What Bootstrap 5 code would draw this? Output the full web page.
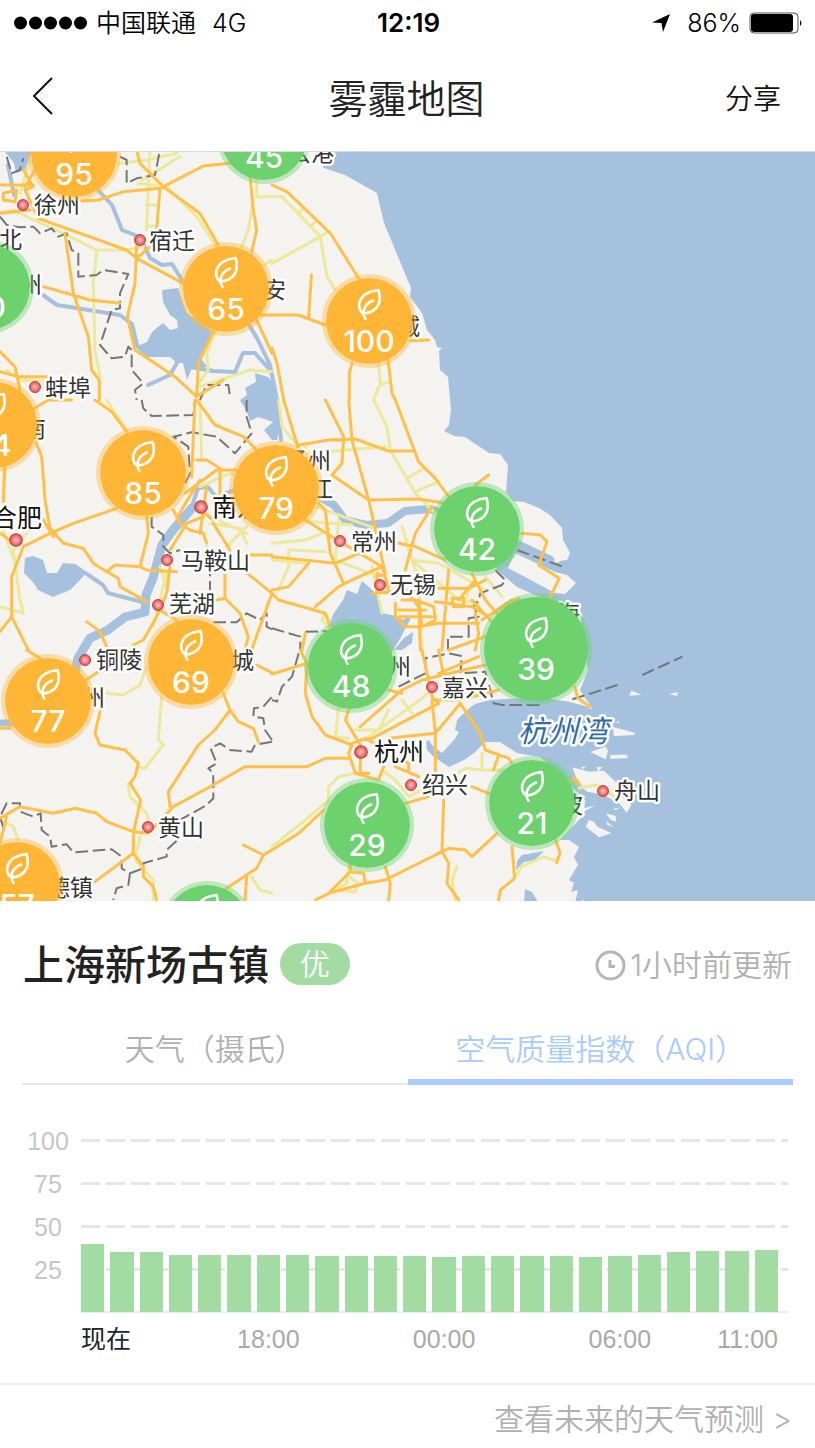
<!DOCTYPE html>
<html lang="zh-CN">
<head>
<meta charset="utf-8">
<meta name="viewport" content="width=device-width, initial-scale=1">
<title>雾霾地图</title>
<link rel="stylesheet" href="https://cdn.jsdelivr.net/npm/bootstrap@5.3.0/dist/css/bootstrap.min.css">
<style>
  body { font-family: "Inter", "Noto Sans CJK SC", sans-serif; color: #222; background: #fff; }
  svg { display: block; }

  .status-row { height: 46px; padding: 0 12px 0 14px; font-size: 25px; line-height: 46px; color: #000; }
  .status-row .side { flex: 1 1 0; }
  .carrier { font-weight: 350; }
  .clock { font-size: 26px; font-weight: 600; }

  .title-bar { height: 105px; padding: 0 34px 0 32px; }
  .title-bar .side { flex: 1 1 0; }
  .title-bar h1 { font-size: 39px; line-height: 56px; font-weight: 350; }
  .plain-btn { border: 0; background: none; padding: 0; color: #111; }
  .share-btn { font-size: 28px; line-height: 40px; font-weight: 350; }

  .map-area { height: 750px; border-top: 1px solid #d5dbe2; background: #a5c1de; }
  .map-area > svg { height: 749px; width: 100%; }
  .land { fill: #f4f3f0; }
  .sea { fill: #a5c1de; }
  .river, .road, .lane, .edge { fill: none; stroke-linejoin: round; stroke-linecap: round; }
  .river { stroke: #a5c1de; }
  .lane { stroke: #ece99a; stroke-width: 9; }
  .road { stroke: #ffc04a; stroke-width: 9; }
  .edge { stroke: #74767a; stroke-width: 6; stroke-dasharray: 38 14; stroke-linecap: butt; }
  .city text { font: 23px "Noto Sans CJK SC", sans-serif; fill: #333; stroke: #fff; stroke-width: 5px; paint-order: stroke; stroke-linejoin: round; }
  .city .r { text-anchor: end; }
  .city .big { font-size: 25px; fill: #111; }
  .city .bay { font-size: 30px; font-style: italic; fill: #2f6ba8; }

  .pin { position: absolute; width: 94px; height: 94px; margin: -47px 0 0 -47px; padding: 4px 0 0; border: 0; border-radius: 50%;
         color: #fff; font-size: 30px; line-height: 36px; font-weight: 500; }
  .pin svg { width: 24px; height: 32px; margin-bottom: 3px; }
  .pin.good { background: #6dd26e; border: 4px solid rgba(109,210,110,.4); }
  .pin.fair { background: #ffb636; border: 4px solid rgba(255,182,54,.4); }
  .pin.good, .pin.fair { background-clip: padding-box; }
  .pin.current { width: 112px; height: 112px; margin: -56px 0 0 -56px; }

  .place { padding: 34px 23px 0; }
  .place h2 { font-size: 41px; line-height: 60px; font-weight: 500; }
  .grade { font-size: 30px; line-height: 42px; font-weight: 350; background: #a2dca2; padding: 0 20px; margin: 0 0 2px 11px; }
  .updated { font-size: 30px; line-height: 44px; font-weight: 350; color: #b0b0b0; }

  .tab-row { margin: 24px 22px 0; border-bottom: 2px solid #e9e9e9; }
  .tab-row .nav-link { width: 100%; height: 66px; padding: 8px 0 16px; font-size: 30px; line-height: 44px; font-weight: 350; color: #b0b0b0; border: 0; border-bottom: 6px solid transparent; margin-bottom: -2px; background: none; border-radius: 0; }
  .tab-row .nav-link.active { color: #a9cbff; border-bottom-color: #a9cbff; }

  .chart { margin: 35px 27px 0 15px; font-family: "Liberation Sans", "Noto Sans CJK SC", sans-serif; font-size: 25px; }
  .scale-col { width: 66px; flex: none; color: #c6c6c6; text-align: center; }
  .scale-col div { height: 43px; line-height: 43px; }
  .plot { display: grid; margin-top: 19px; height: 175px; }
  .plot > * { grid-area: 1 / 1; }
  .rules div { height: 43px; background: repeating-linear-gradient(90deg, #e6e6e6 0 19px, transparent 19px 25px) 0 0 / 100% 3px no-repeat; }
  .rules .base { height: 2px; background: #ececec; }
  .bars { display: grid; grid-template-columns: repeat(24, 1fr); column-gap: 6px; align-items: end; margin-right: 10px; padding-bottom: 2px; }
  .bars i { background: #a2dca2; }
  .hours { display: grid; grid-template-columns: repeat(24, 1fr); column-gap: 6px; margin-right: 10px; padding-top: 7px; line-height: 36px; color: #a9a9a9; text-align: center; white-space: nowrap; }

  .more { margin-top: 26px; padding: 10px 23px 0; border-top: 2px solid #f1f1f1; height: 64px; }
  .more a { font-size: 30px; line-height: 48px; font-weight: 350; color: #b0b0b0; text-decoration: none; }
</style>
</head>
<body>

<svg width="0" height="0" class="position-absolute" aria-hidden="true">
  <symbol id="leaf" viewBox="0 0 24 32">
    <path d="M21.500 2C14 3 6 5 3 13C1 18 2.500 23 5.500 25M12 24.500C18 22.500 21.500 19 22.500 13C23 9 22.500 5 21.500 2M16 12.500C10.500 14.500 7 19 6.500 24C6.500 27 7 29 8.500 31M7 24.800Q10 25.500 12 24.500" fill="none" stroke="#fff" stroke-width="2.600" stroke-linecap="round" stroke-linejoin="round"/>
  </symbol>
  <radialGradient id="red"><stop offset="0" stop-color="#ffc9c4"/><stop offset="1" stop-color="#e8484f"/></radialGradient>
  <symbol id="dot" viewBox="-7 -7 14 14"><circle r="5.500" fill="url(#red)" stroke="#b54950"/></symbol>
</svg>

<header>
  <div class="status-row d-flex align-items-center">
    <div class="side d-flex align-items-center">
      <svg width="74" height="16" viewBox="0 0 74 16" aria-hidden="true"><circle cx="6.500" cy="8" r="6.500"/><circle cx="21.500" cy="8" r="6.500"/><circle cx="36.500" cy="8" r="6.500"/><circle cx="51.500" cy="8" r="6.500"/><circle cx="66.500" cy="8" r="6.500"/></svg>
      <span class="carrier ms-2">中国联通</span><span class="carrier ms-3">4G</span>
    </div>
    <span class="clock">12:19</span>
    <div class="side d-flex align-items-center justify-content-end">
      <svg class="me-3" width="20" height="20" viewBox="0 0 20 20" aria-hidden="true"><path d="M19 1L12 19L10.500 10L1 9.500Z"/></svg>
      <span class="carrier me-2">86%</span>
      <svg width="54" height="24" viewBox="0 0 54 24" aria-hidden="true"><rect x="1" y="2" width="48" height="20" rx="4" fill="none" stroke="#555"/><rect x="2" y="3" width="42" height="18" rx="3"/><path d="M51 9q3 3 0 6z"/></svg>
    </div>
  </div>
  <div class="title-bar d-flex align-items-center">
    <div class="side"><button class="plain-btn" type="button" aria-label="返回"><svg width="24" height="38" viewBox="0 0 24 38" fill="none" stroke="#111" stroke-width="2"><path d="M20 1L2 19L20 37"/></svg></button></div>
    <h1 class="mb-0">雾霾地图</h1>
    <div class="side text-end"><button class="plain-btn share-btn" type="button">分享</button></div>
  </div>
</header>

<main>
<section class="map-area position-relative overflow-hidden">
  <svg viewBox="0 152 815 749" preserveAspectRatio="xMinYMin slice" aria-hidden="true">
    <!-- mainland and the northern bank of the river mouth -->
    <path class="land" d="M0 150H312L324 168L345 175L377 193L384 223L411 288L410 297L422 313L427 330L435 340L437 347L442 348L439 351L440 370L448 377L451 410L449 425L444 431L454 436L465 437L489 453L500 454L508 465L506 492L513 501L524 502L539 508L550 515L562 528L563 540L570 553L567 560L555 561L518 546L500 535L485 540L497 570L517 587L535 595L570 610L584 640L588 670L580 690L592 708L570 702L540 697L490 700L475 704L467 710L457 720L455 730L459 732L454 740L442 753L432 745L429 740L426 742L427 750L434 757L449 767L464 760L474 753L485 742L500 742L517 753L540 757L570 785L585 800L584 815L577 822L560 840L569 840L579 847L574 857L578 865L569 880L574 883L571 892L578 890L575 903H0Z"/>
    <path class="land" d="M515 553L555 572L567 575L576 583L565 594L555 593L525 577L508 568Z"/>
    <!-- islands -->
    <g class="land" transform="translate(544 560) scale(.3333)">
      <path d="M85 622L135 635L180 632L215 665L235 710L262 735L248 758L225 730L180 705L130 695L105 675ZM138 576L185 560L192 572L185 598ZM205 500L272 518V525L210 528ZM200 584H248L252 594L198 597ZM256 407L262 392L292 404ZM375 403L400 396V408ZM292 421L310 428ZM158 620L175 622L162 635ZM110 620H126L116 628ZM125 800L135 780L150 785L160 800L203 820L165 832ZM186 760L215 768L217 785L200 780ZM186 783L210 802L190 795ZM100 750L154 736L120 755ZM207 746L228 743L215 751ZM218 482L228 486L221 490ZM130 440L150 446L138 446ZM0 0H55L40 8ZM115 1018L122 1024H114Z"/>
    </g>

    <!-- lakes -->
    <g class="sea">
      <path d="M5 152H32L25 170L16 173L14 163Z"/>
      <path d="M162 290L178 288L183 303L187 313L213 332L200 357L207 367L192 368L187 380L183 363L177 363L170 357L147 357L135 347L147 342L152 332L163 323L170 330L178 328L177 320L170 315L163 302Z"/>
      <path d="M240 400L247 395L245 388L256 382L255 373L268 377L275 385L276 400L282 420L277 440L272 440L264 430L273 422L258 417L250 421L247 412Z"/>
      <path d="M25 558L33 556L43 560L47 573L57 573L63 563L75 564L87 572L80 580L70 590L53 597L38 590L33 582L24 573Z"/>
      <path d="M362 581L369 587L379 597L382 613L400 617L402 620L412 616L400 639L390 655L345 660L330 622L334 613L343 600L347 590L357 594Z"/>
      <path d="M404 638L413 632L412 643L402 650L394 650Z"/>
      <path d="M517 861L522 855L544 851L535 860L524 862L516 870ZM525 889L532 892L538 902H524Z"/>
    </g>
    <!-- rivers -->
    <g class="river" stroke-width="4">
      <path d="M8 165L14 195M98 190L112 205L122 230L140 237L150 258L162 265L172 264L182 280M43 295L57 305L120 315L132 324L137 345M248 323L258 340L270 365L277 400L281 440M187 345L170 375L148 385M190 367L213 371L235 372L243 353L255 353L270 370M87 574L103 585L108 593L142 602M192 506L198 488L208 487L216 497L235 490"/>
      <path d="M192 508L173 530L162 545L153 578L146 595L145 612L125 617L108 630L90 638L78 658L75 672" stroke-width="9"/>
      <path d="M320 497L334 505L345 520L366 525L388 523L405 511L430 509L450 516" stroke-width="8"/>
      <path d="M510 541L550 560" stroke-width="9"/>
      <path d="M0 723L12 723" stroke-width="7"/>
    </g>

    <!-- yellow county roads -->
    <g class="lane">
      <path transform="translate(0 150) scale(.3333)" d="M60 130L90 30M0 190L40 180L100 210L180 245L290 300L380 300L430 290M290 300L280 400L285 600L300 680M440 240L445 110L450 0M415 100L500 110L590 200L650 290M440 165H470M440 228H466M425 90L540 20M355 40L440 30L530 10M770 80V140H816M816 330L750 370M760 150L745 240L725 290M650 540L620 610L625 660L590 710M600 710L750 660L816 665M20 660L60 690L180 695"/>
      <path transform="translate(272 150) scale(.3333)" d="M0 140H30L145 260L165 380L190 420M0 340L145 260L170 245M80 190L95 175M115 230L130 215M320 640L325 700L305 750M325 705L352 695"/>
      <path transform="translate(0 400) scale(.3333)" d="M320 0L380 90M600 0L605 180M600 260L690 220L720 230M10 170V300M80 400L40 450L60 600L70 640L0 620M5 380L50 500M500 520L480 600L460 680M630 370L720 385L740 430M590 330L740 400M500 560L480 500M680 440L740 380"/>
      <path transform="translate(272 400) scale(.3333)" d="M305 0L345 80L355 150L430 280L500 350M20 0L30 80L80 140M100 130V160L340 140M405 235L455 205M430 275L500 245M0 390L60 360L240 375M60 450L160 455M50 450V500L20 570M130 320L310 385M200 360L190 480L320 530M160 370L175 460M0 430L100 420L150 400M390 380L440 540L450 750M420 480L500 490L640 570M640 530L690 590M400 420L420 480L560 600L620 610M300 500L330 640M580 600L600 550M160 640L150 660L180 690M0 480L100 490"/>
      <path transform="translate(0 650) scale(.3333)" d="M320 130L370 135L420 105L440 50M485 140L475 270L490 285L435 355L410 350M385 400L390 440L440 490L445 510M420 560L405 630L460 690L460 750M0 510L40 530L55 570M755 680L780 720L816 730"/>
      <path transform="translate(272 650) scale(.3333)" d="M200 170L190 260L230 265M240 240L320 240L350 180M290 260L430 160L480 120M170 410L200 380L250 370M170 410V450L100 510L0 590M330 360L370 390L410 440L450 420M630 310V360L580 355L510 400M630 360H700M390 150L420 190M230 650L225 700L190 720L250 725L260 700L230 680M555 650L540 690L550 750M816 620L750 650L730 680"/>
      <path transform="translate(544 560) scale(.3333)" d="M105 685L155 675L175 680L210 710M0 890L40 905"/>
    </g>
    <!-- provincial boundaries -->
    <g class="edge">
      <path transform="translate(0 150) scale(.3333)" d="M20 20L35 70L60 60L70 25M360 20L380 30V100L410 85L465 75L480 0M0 200L20 225L60 232L100 230L120 250L155 235L175 260L200 250L215 300L235 310V380L290 375L310 360L385 372L360 430V475L335 480L300 585L335 625L375 620L385 590L395 600V660L430 700L405 720L410 750M600 750L620 705H685L690 740"/>
      <path transform="translate(0 400) scale(.3333)" d="M425 0L430 25L455 48L580 45L585 0M555 250L570 220L565 140L520 110L575 97L650 110L705 160L730 130L755 100L740 50V0M455 350V380L490 405V440L510 460L540 450M620 440L630 500V570M640 667H710L740 640L780 660L800 640V680L816 688"/>
      <path transform="translate(272 400) scale(.3333)" d="M0 685L85 710V750M100 695L200 693M735 450L880 503M670 510L700 540L690 555L625 580L620 600L605 620L620 650L590 655V710H528V750"/>
      <path transform="translate(272 650) scale(.3333)" d="M80 10L60 80L30 110L15 155L0 150M380 110L460 70V25L530 10L570 18L565 70L640 65L665 160L690 165H816"/>
      <path transform="translate(544 560) scale(.3333)" d="M85 418L230 372M295 345L415 290"/>
      <path transform="translate(0 650) scale(.3333)" d="M816 270L795 240L790 205L760 200L762 175L790 170L816 140M816 275L765 285L755 305L690 300L660 280L632 295L650 340L625 355L640 370V445L620 465L540 510M530 572L500 600V620L430 640V655L390 670L365 655V620L335 598L220 607L200 583L155 590L150 560L125 540L122 490L100 500L60 485V460H20L0 500L12 540L0 545M390 670L385 705L350 715L340 750"/>
    </g>
    <!-- orange highways -->
    <g class="road">
      <path transform="translate(0 150) scale(.3333)" d="M0 105H100M70 60L100 110L75 120L115 205L380 300L410 325L550 400M0 190L90 180M10 130L50 120L45 155L10 150ZM75 110L110 50M245 153L295 150L370 125L480 115L610 48L690 40M480 115L470 240M410 0L420 40L490 110L600 190L655 285M410 285L405 400L382 500L405 600L525 680L590 740M410 325L450 290M195 250L220 430L265 560L275 660L298 690V750M130 410L270 450L360 460M0 605L45 650L60 720M0 665L55 680H145M750 80L760 180L770 240L755 305M640 545L595 640L590 740L670 690M770 510L816 610M780 495H816"/>
      <path transform="translate(272 150) scale(.3333)" d="M0 105L45 125L175 250L260 385M0 495H78L160 525M118 375L110 500M240 640L232 670V750M348 630L360 730L370 750M415 572L470 570M0 595L15 640L35 750"/>
      <path transform="translate(0 400) scale(.3333)" d="M95 30L145 0H215M285 0L335 35L380 95M105 120L125 170L135 300L150 385L190 430L250 445L280 490L320 515L355 535L360 560L440 605M15 200L10 305M350 325L220 370L150 400L70 440L35 530V650L0 695M35 650L85 750M440 350L445 400L420 500M320 515L345 495L420 500L440 510L530 515M585 0L575 230M590 0L645 75L730 110L770 150M555 280L650 210H710M590 180H620L660 205V280M520 330L540 370L570 390L610 400L620 430M530 360L550 320L600 240M620 260L600 400M640 370L690 450M600 330L640 360M510 450L560 370L610 350M510 500L500 580L470 650L430 720L400 735M480 630L530 660M675 520V595L720 640L745 710L735 750M730 510L816 580L755 750M750 465H816M650 600L675 595M260 665L300 695L320 740M130 360L160 410M0 400L30 420"/>
      <path transform="translate(272 400) scale(.3333)" d="M35 0L80 150M80 135L170 120L250 117L350 153H425M160 0L215 110L210 190L180 225L290 300L440 297L520 310M230 0L240 120L290 300L340 520M370 0L440 185L490 235L530 290M610 255L650 225M100 360L180 410L330 500L350 560M0 470L190 490L260 460M140 310L160 330L175 460L215 550M0 570L50 560L110 490M0 580L20 600L160 640L175 680M130 620L200 560L240 540L330 500M380 430L430 440L520 480M480 320L430 400L400 510M315 580V520L340 530L350 580M370 610V650L400 680L440 680L500 670H620M530 510L510 750M500 565H590L640 540M600 520L640 600L700 670M560 600L610 540M540 595H575V620H545ZM390 600L430 600L485 620L490 660L450 680L440 600M380 630H460M380 650H480M490 605L600 620L650 650M415 590L440 620L445 750M610 640L620 700L610 750M630 660L720 600M660 640L740 595M530 750L640 710L700 700M300 580L450 570M750 400L805 405L825 425L800 495L862 535L830 600M100 700L90 750M700 710L600 600"/>
      <path transform="translate(0 650) scale(.3333)" d="M80 0L120 25M250 95L295 65M300 185L285 250L300 285L375 300L415 340L405 380L390 400L422 450L400 550V610L430 650V680L460 710L470 750M0 505L60 470L160 490L225 475L290 490L320 515L400 545L445 550L520 470L640 405L735 350H816M670 130L690 180L645 240L595 285L505 425L510 470M690 180L715 215L760 235L775 275M0 580L20 500M400 610L285 695M240 750L265 735M770 45L816 68M730 585L790 615L816 600M790 615L770 655L680 715M740 680L735 750M0 235H30"/>
      <path transform="translate(272 650) scale(.3333)" d="M0 72L105 40M85 0L105 40L100 130L120 200L160 255L240 285M0 350H105L160 325H230M230 180L220 210L265 285V370M240 285L230 310L250 370L320 390L335 350M265 270L300 265L500 160L480 140L450 0M265 230L390 120L450 90L640 45M240 280L280 265L340 300M350 120L390 130M480 150L490 250L490 400M565 160L490 250L350 265M480 150H560L680 120M500 70L620 20M500 0L530 150M565 160L625 250L640 300L710 325L720 340M680 315L665 360M370 350L440 380M335 300L410 340V360M600 410L650 430M400 460L470 440M515 450L510 605L340 690L280 700L170 730L130 750M510 605L530 595L580 600L600 620L675 550M510 605L530 640L525 700L560 750M235 640V665L275 670L280 700M230 670L170 730M340 650L355 700L350 750M155 480L80 550L0 600M720 590L728 685L685 720L680 750M250 370H290"/>
      <path transform="translate(544 560) scale(.3333)" d="M92 380L102 415L138 440M80 665L92 653L108 675M35 840L48 880L38 908"/>
    </g>

    <g class="city">
      <text class="r" x="334" y="161">连云港</text><text x="34" y="213">徐州</text><text class="r" x="22" y="248">淮北</text><text x="149" y="249">宿迁</text>
      <text class="r" x="42" y="293">宿州</text><text class="r" x="286" y="298">淮安</text><text class="r" x="420" y="335">盐城</text><text x="45" y="396">蚌埠</text>
      <text class="r" x="46" y="437">淮南</text><text class="r" x="331" y="469">扬州</text><text class="r" x="333" y="497">镇江</text><text class="big" x="212" y="516">南京</text>
      <text class="big r" x="42" y="527">合肥</text><text x="351" y="550">常州</text><text x="181" y="569">马鞍山</text><text x="390" y="593">无锡</text>
      <text x="169" y="612">芜湖</text><text class="r" x="580" y="622">上海</text><text x="96" y="668">铜陵</text><text class="r" x="254" y="669">宣城</text>
      <text class="r" x="411" y="675">湖州</text><text x="442" y="696">嘉兴</text><text class="r" x="105" y="706">池州</text><text class="bay" x="518" y="742">杭州湾</text>
      <text class="big" x="374" y="761">杭州</text><text x="422" y="793">绍兴</text><text x="614" y="799">舟山</text><text class="r" x="583" y="813">宁波</text>
      <text x="158" y="836">黄山</text><text class="r" x="93" y="896">景德镇</text>
    </g>
    <g>
      <use href="#dot" x="16" y="198" width="14" height="14"/><use href="#dot" x="133" y="233" width="14" height="14"/><use href="#dot" x="28" y="380" width="14" height="14"/>
      <use href="#dot" x="193" y="499" width="16" height="16"/><use href="#dot" x="8" y="532" width="16" height="16"/><use href="#dot" x="333" y="534" width="14" height="14"/>
      <use href="#dot" x="160" y="553" width="14" height="14"/><use href="#dot" x="373" y="578" width="14" height="14"/><use href="#dot" x="151" y="598" width="14" height="14"/>
      <use href="#dot" x="78" y="653" width="14" height="14"/><use href="#dot" x="425" y="680" width="14" height="14"/><use href="#dot" x="353" y="744" width="16" height="16"/>
      <use href="#dot" x="404" y="778" width="14" height="14"/><use href="#dot" x="596" y="784" width="14" height="14"/><use href="#dot" x="141" y="820" width="14" height="14"/>
    </g>
  </svg>

  <button type="button" class="pin fair d-flex flex-column align-items-center justify-content-center" style="left:74px;top:2px"><svg><use href="#leaf"/></svg>95</button>
  <button type="button" class="pin good d-flex flex-column align-items-center justify-content-center" style="left:264px;top:-15px"><svg><use href="#leaf"/></svg>45</button>
  <button type="button" class="pin fair d-flex flex-column align-items-center justify-content-center" style="left:226px;top:137px"><svg><use href="#leaf"/></svg>65</button>
  <button type="button" class="pin good d-flex flex-column align-items-center justify-content-center" style="left:-13px;top:135px"><svg><use href="#leaf"/></svg>50</button>
  <button type="button" class="pin fair d-flex flex-column align-items-center justify-content-center" style="left:369px;top:169px"><svg><use href="#leaf"/></svg>100</button>
  <button type="button" class="pin fair d-flex flex-column align-items-center justify-content-center" style="left:-6px;top:273px"><svg><use href="#leaf"/></svg>74</button>
  <button type="button" class="pin fair d-flex flex-column align-items-center justify-content-center" style="left:143px;top:321px"><svg><use href="#leaf"/></svg>85</button>
  <button type="button" class="pin fair d-flex flex-column align-items-center justify-content-center" style="left:276px;top:336px"><svg><use href="#leaf"/></svg>79</button>
  <button type="button" class="pin good d-flex flex-column align-items-center justify-content-center" style="left:477px;top:377px"><svg><use href="#leaf"/></svg>42</button>
  <button type="button" class="pin good current d-flex flex-column align-items-center justify-content-center" style="left:536px;top:497px"><svg><use href="#leaf"/></svg>39</button>
  <button type="button" class="pin good d-flex flex-column align-items-center justify-content-center" style="left:351px;top:514px"><svg><use href="#leaf"/></svg>48</button>
  <button type="button" class="pin fair d-flex flex-column align-items-center justify-content-center" style="left:191px;top:510px"><svg><use href="#leaf"/></svg>69</button>
  <button type="button" class="pin fair d-flex flex-column align-items-center justify-content-center" style="left:48px;top:549px"><svg><use href="#leaf"/></svg>77</button>
  <button type="button" class="pin good d-flex flex-column align-items-center justify-content-center" style="left:367px;top:673px"><svg><use href="#leaf"/></svg>29</button>
  <button type="button" class="pin good d-flex flex-column align-items-center justify-content-center" style="left:532px;top:651px"><svg><use href="#leaf"/></svg>21</button>
  <button type="button" class="pin fair d-flex flex-column align-items-center justify-content-center" style="left:17px;top:733px"><svg><use href="#leaf"/></svg>57</button>
  <button type="button" class="pin good d-flex flex-column align-items-center pt-2" style="left:207px;top:776px"><svg><use href="#leaf"/></svg></button>
</section>

<section>
  <div class="place d-flex align-items-center">
    <h2 class="mb-0">上海新场古镇</h2>
    <span class="grade rounded-pill text-white">优</span>
    <span class="updated ms-auto d-flex align-items-center"><svg class="me-1" width="31" height="31" viewBox="0 0 31 31" fill="none" stroke="#b5b5b5" stroke-width="3" aria-hidden="true"><circle cx="15.500" cy="15.500" r="13.500"/><path d="M15 10V16.500H20"/></svg>1小时前更新</span>
  </div>

  <ul class="tab-row nav nav-fill flex-nowrap" role="tablist">
    <li class="nav-item w-50" role="presentation"><button class="nav-link" type="button" role="tab">天气（摄氏）</button></li>
    <li class="nav-item w-50" role="presentation"><button class="nav-link active" type="button" role="tab" aria-selected="true">空气质量指数（AQI）</button></li>
  </ul>

  <div class="chart d-flex">
    <div class="scale-col"><div>100</div><div>75</div><div>50</div><div>25</div></div>
    <div class="flex-grow-1">
      <div class="plot">
        <div class="rules"><div></div><div></div><div></div><div></div><div class="base"></div></div>
        <div class="bars">
          <i style="height:68px"></i><i style="height:60px"></i><i style="height:60px"></i><i style="height:57px"></i><i style="height:57px"></i><i style="height:57px"></i>
          <i style="height:57px"></i><i style="height:57px"></i><i style="height:56px"></i><i style="height:56px"></i><i style="height:56px"></i><i style="height:56px"></i>
          <i style="height:55px"></i><i style="height:56px"></i><i style="height:56px"></i><i style="height:56px"></i><i style="height:56px"></i><i style="height:55px"></i>
          <i style="height:56px"></i><i style="height:57px"></i><i style="height:60px"></i><i style="height:61px"></i><i style="height:61px"></i><i style="height:62px"></i>
        </div>
      </div>
      <div class="hours">
        <span class="text-start text-dark" style="grid-column:1/4">现在</span><span style="grid-column:6/9">18:00</span><span style="grid-column:12/15">00:00</span><span style="grid-column:18/21">06:00</span><span class="text-end" style="grid-column:22/25">11:00</span>
      </div>
    </div>
  </div>

  <div class="more text-end"><a href="#">查看未来的天气预测 &gt;</a></div>
</section>
</main>
<script src="https://cdn.jsdelivr.net/npm/bootstrap@5.3.0/dist/js/bootstrap.bundle.min.js"></script>
</body>
</html>
